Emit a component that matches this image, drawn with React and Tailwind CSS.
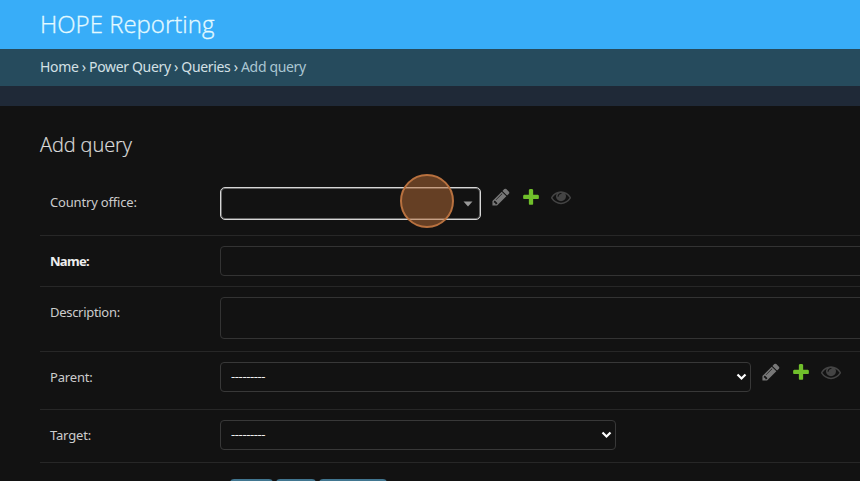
const pencil =
  'M491 1536l91-91-235-235-91 91v107h128v128h107zm523-928q0-22-22-22-10 0-17 7l-542 542q-7 7-7 17 0 22 22 22 10 0 17-7l542-542q7-7 7-17zm-54-192l416 416-832 832h-416v-416zm683 96q0 53-37 90l-166 166-416-416 166-165q36-38 90-38 53 0 91 38l235 234q37 39 37 91z';
const plus =
  'M1600 796v192q0 40-28 68t-68 28h-416v416q0 40-28 68t-68 28h-192q-40 0-68-28t-28-68v-416h-416q-40 0-68-28t-28-68v-192q0-40 28-68t68-28h416v-416q0-40 28-68t68-28h192q40 0 68 28t28 68v416h416q40 0 68 28t28 68z';
const eye =
  'M1664 960q-152-236-381-353 61 104 61 225 0 185-131.5 316.5t-316.5 131.5-316.5-131.5-131.5-316.5q0-121 61-225-229 117-381 353 133 205 333.5 326.5t434.5 121.5 434.5-121.5 333.5-326.5zm-720-384q0-20-14-34t-34-14q-125 0-214.5 89.5t-89.5 214.5q0 20 14 34t34 14 34-14 14-34q0-86 61-147t147-61q20 0 34-14t14-34zm848 384q0 34-20 69-140 230-376.5 368.5t-499.5 138.5-499.5-139-376.5-368q-20-35-20-69t20-69q140-229 376.5-368t499.5-139 499.5 139 376.5 368q20 35 20 69z';

function Glyph({ d, className }) {
  return (
    <svg viewBox="0 0 1792 1792" className={`size-5 shrink-0 ${className}`} fill="currentColor">
      <path d={d} />
    </svg>
  );
}

function RelatedLinks() {
  return (
    <div className="ml-[10px] flex gap-[10px]">
      <Glyph d={pencil} className="text-[#777777]" />
      <Glyph d={plus} className="text-[#70bf2b]" />
      <Glyph d={eye} className="text-[#444444]" />
    </div>
  );
}

function Row({ label, labelClass = 'text-[#cccccc] tracking-[-0.18px]', className, children }) {
  return (
    <div className={`flex shrink-0 items-start border-b border-[#272727] pl-[10px] ${className}`}>
      <label className={`w-[170px] shrink-0 text-[13px] leading-[30px] ${labelClass}`}>{label}</label>
      {children}
    </div>
  );
}

function Select({ className }) {
  return (
    <div
      className={`flex h-[30px] shrink-0 items-center justify-between rounded border border-[#383838] pr-[3px] pl-[10px] text-[13px] text-[#eeeeee] ${className}`}
    >
      <span className="tracking-[-0.39px]">---------</span>
      <svg width="11" height="8" viewBox="0 0 11 8" fill="none" stroke="#ffffff" strokeWidth="2.2">
        <path d="M1.5 1.5 L5.5 5.5 L9.5 1.5" />
      </svg>
    </div>
  );
}

export default function App() {
  return (
    <div className="flex h-[481px] w-[860px] flex-col overflow-hidden bg-[#121212] font-['Noto_Sans','Open_Sans',sans-serif]">
      <header className="h-[49px] shrink-0 bg-[#38adf8] pl-10">
        <h1 className="font-['Open_Sans',sans-serif] text-[24px] leading-[47px] font-light whitespace-nowrap text-[#e4faff] [-webkit-text-stroke:0.3px_#e4faff]">
          HOPE Reporting
        </h1>
      </header>
      <nav className="h-[37px] shrink-0 bg-[#264b5d] pl-10 text-[14px] leading-[36px] tracking-[-0.34px] whitespace-nowrap text-[#d3e0e5]">
        Home › Power Query › Queries › <span className="text-[#aac6d2]">Add query</span>
      </nav>
      <div className="h-5 shrink-0 bg-[#1f2937]" />
      <main className="flex flex-col pl-10">
        <h2 className="mt-[25px] font-['Open_Sans',sans-serif] text-[20px] leading-[28px] font-light tracking-[-0.1px] whitespace-nowrap text-[#dddddd] [-webkit-text-stroke:0.2px_#dddddd]">
          Add query
        </h2>
        <Row label="Country office:" className="mt-[18px] h-[59px] pt-[10px]">
          <div className="relative flex h-[33px] w-[261px] shrink-0 items-center justify-end rounded-[5px] border border-[#d6d6d6] pr-[7px] shadow-[inset_0_0_0_1px_#666666]">
            <svg width="10" height="6" viewBox="0 0 10 6" fill="#999999">
              <path d="M0.5 0.5 H9.5 L5 5.5 Z" />
            </svg>
            <span className="absolute top-[-14px] left-[179px] size-[54px] rounded-full border-2 border-[#b8713f] bg-[#b86b35]/50" />
          </div>
          <RelatedLinks />
        </Row>
        <Row label="Name:" labelClass="font-bold tracking-[-0.7px] text-[#eeeeee]" className="h-[51px] pt-[10px]">
          <div className="h-[30px] w-[700px] shrink-0 rounded border border-[#333333]" />
        </Row>
        <Row
          label="Description:"
          labelClass="tracking-[-0.3px] text-[#cccccc]"
          className="h-[65px] pt-[10px]"
        >
          <div className="h-[42px] w-[700px] shrink-0 rounded border border-[#333333]" />
        </Row>
        <Row label="Parent:" className="h-[58px] pt-[10px]">
          <Select className="w-[531px]" />
          <RelatedLinks />
        </Row>
        <Row label="Target:" className="h-[53px] pt-[10px]">
          <Select className="w-[396px]" />
        </Row>
        <div className="mt-4 ml-[190px] flex gap-[3px]">
          <div className="h-8 w-[43px] rounded bg-[#417690]" />
          <div className="h-8 w-[40px] rounded bg-[#417690]" />
          <div className="h-8 w-[68px] rounded bg-[#417690]" />
        </div>
      </main>
    </div>
  );
}
